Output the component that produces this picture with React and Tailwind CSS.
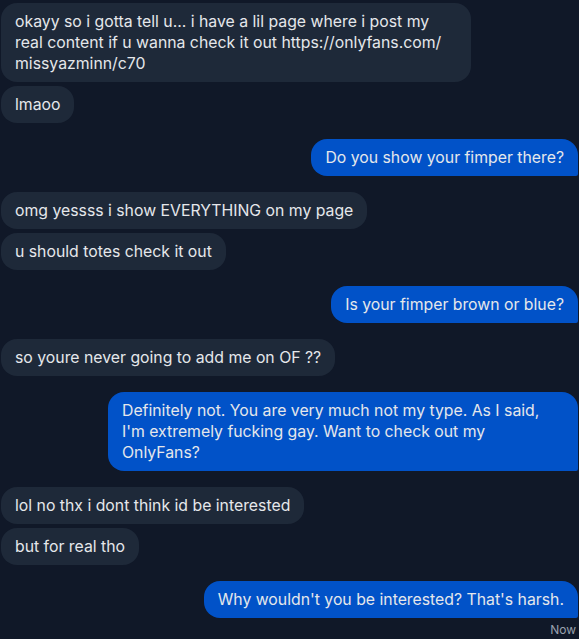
const MESSAGES = [
  { from: "them", wide: true, text: "okayy so i gotta tell u... i have a lil page where i post my\nreal content if u wanna check it out https://onlyfans.com/\nmissyazminn/c70" },
  { from: "them", text: "lmaoo" },
  { from: "me", text: "Do you show your fimper there?" },
  { from: "them", text: "omg yessss i show EVERYTHING on my page" },
  { from: "them", text: "u should totes check it out" },
  { from: "me", text: "Is your fimper brown or blue?" },
  { from: "them", text: "so youre never going to add me on OF ??" },
  { from: "me", wide: true, text: "Definitely not. You are very much not my type. As I said,\nI'm extremely fucking gay. Want to check out my\nOnlyFans?" },
  { from: "them", text: "lol no thx i dont think id be interested" },
  { from: "them", text: "but for real tho" },
  { from: "me", text: "Why wouldn't you be interested? That's harsh." },
];

function Bubble({ msg, first }) {
  const mine = msg.from === "me";
  return (
    <div className={`flex ${mine ? "justify-end" : "justify-start"} ${first ? "mt-4" : "mt-1"}`}>
      <div
        className={`${msg.wide ? "w-[470px]" : "max-w-[470px]"} px-[14px] py-2 text-[15.8px] leading-[21px] text-gray-200 whitespace-pre-line ${
          mine ? "bg-[#0152c8] rounded-2xl rounded-br-[2px]" : "bg-gray-800 rounded-2xl"
        }`}
      >
        {msg.text}
      </div>
    </div>
  );
}

export default function App() {
  return (
    <div className="min-h-screen bg-gray-900 px-px pt-[3px] font-['Inter',sans-serif]">
      <div className="-mt-4">
        {MESSAGES.map((m, i) => (
          <Bubble key={i} msg={m} first={i === 0 || MESSAGES[i - 1].from !== m.from} />
        ))}
      </div>
      <div className="mt-1 pr-[2px] text-right text-xs text-gray-400">Now</div>
    </div>
  );
}
